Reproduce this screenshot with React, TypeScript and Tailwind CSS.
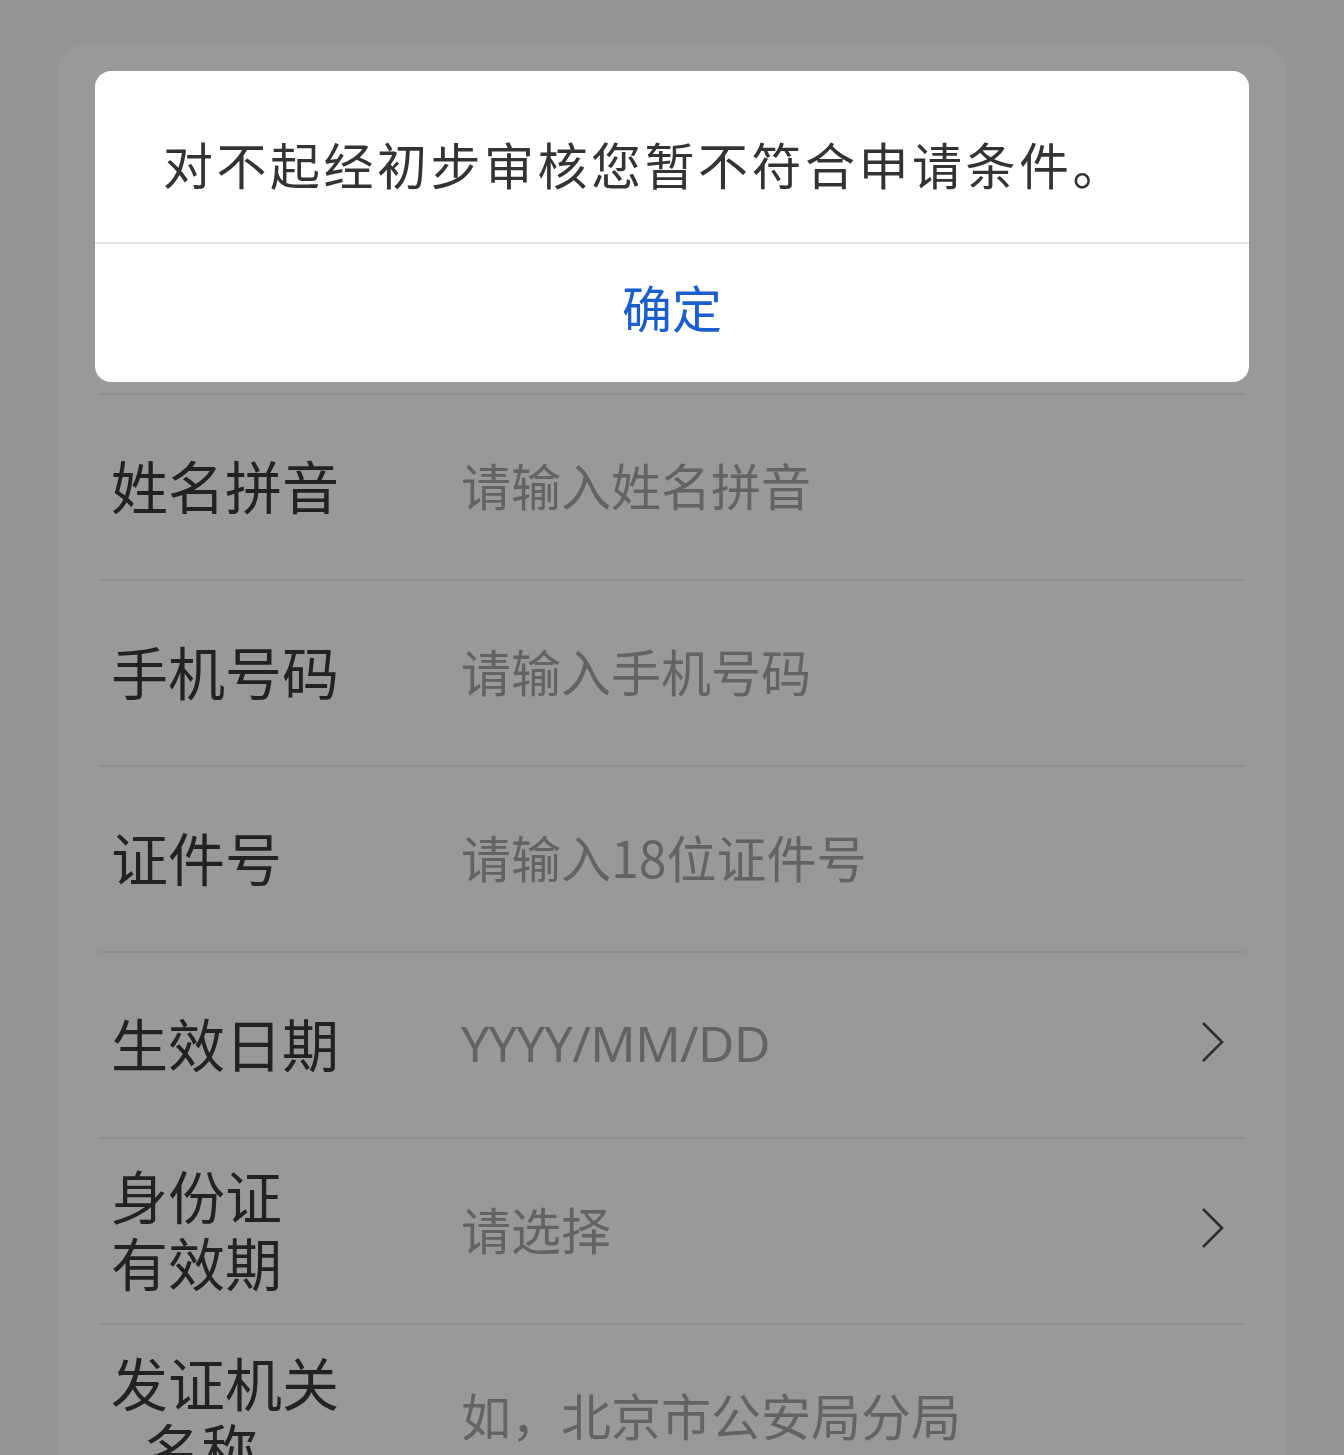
import React from "react";

const FONT = { fontFamily: '"Noto Sans CJK SC", "Noto Sans", sans-serif' };

function Chevron() {
  return (
    <svg width="24" height="42" viewBox="0 0 24 42" className="shrink-0">
      <polyline points="3,2 22,21 3,40" fill="none" stroke="#2e2e2e" strokeWidth="2.6" />
    </svg>
  );
}

type Row = { label: React.ReactNode; placeholder: React.ReactNode; chevron?: boolean };

const rows: Row[] = [
  { label: "姓名拼音", placeholder: "请输入姓名拼音" },
  { label: "手机号码", placeholder: "请输入手机号码" },
  { label: "证件号", placeholder: "请输入18位证件号" },
  {
    label: "生效日期",
    placeholder: (
      <span style={{ fontFamily: '"Noto Sans", "Noto Sans CJK SC", sans-serif' }} className="tracking-[-0.5px]">
        YYYY/MM/DD
      </span>
    ),
    chevron: true,
  },
  {
    label: (
      <div className="flex flex-col leading-[67px]">
        <span>身份证</span>
        <span>有效期</span>
      </div>
    ),
    placeholder: "请选择",
    chevron: true,
  },
  {
    label: (
      <div className="flex flex-col leading-[66px]">
        <span>发证机关</span>
        <span className="pl-[33px]">名称</span>
      </div>
    ),
    placeholder: "如，北京市公安局分局",
  },
];

export default function App() {
  return (
    <div className="relative h-[1455px] w-full overflow-hidden bg-[#959595]" style={FONT}>
      <div className="mx-[58px] mt-[44px] rounded-[28px] bg-[#999999] px-[42px]">
        <div className="h-[349px]" />
        {rows.map((r, i) => (
          <div key={i} className="flex h-[186px] items-center border-t-2 border-[#8f8f8f] pb-[7px] pl-[11px] pr-[20px]">
            <div className="w-[350px] shrink-0 text-[57px] leading-[66px] text-[#222222]">{r.label}</div>
            <div className="flex-1 text-[50px] leading-[60px] text-[#636363]">{r.placeholder}</div>
            {r.chevron && <Chevron />}
          </div>
        ))}
      </div>

      <div className="absolute left-[95px] top-[71px] flex h-[311px] w-[1154px] flex-col overflow-hidden rounded-[16px] bg-white">
        <div className="h-[171px] shrink-0 pl-[68px] pt-[62px] text-[50px] leading-[60px] tracking-[3.5px] text-[#333333]">
          对不起经初步审核您暂不符合申请条件。
        </div>
        <div className="h-[2px] shrink-0 bg-[#e3e3e3]" />
        <div className="flex flex-1 items-center justify-center pb-[14px] text-[50px] leading-[60px] text-[#1b5fcf]">
          确定
        </div>
      </div>
    </div>
  );
}
